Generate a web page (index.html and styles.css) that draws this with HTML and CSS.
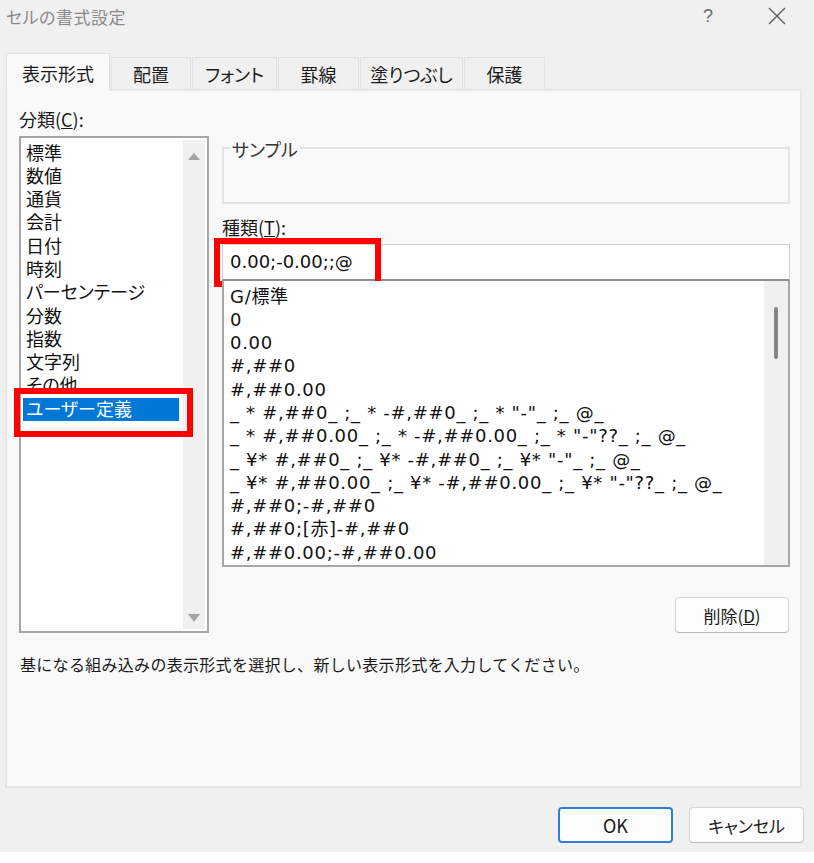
FILE: index.html
```html
<!DOCTYPE html>
<html lang="ja">
<head>
<meta charset="utf-8">
<title>セルの書式設定</title>
<link rel="stylesheet" href="styles.css">
</head>
<body>
<div class="dialog">
  <div class="titlebar">
    <span class="title">セルの書式設定</span>
    <span class="help">?</span>
    <svg class="close" width="18" height="18" viewBox="0 0 18 18"><path d="M1 1 L17 17 M17 1 L1 17" stroke="#5a5a5a" stroke-width="1.3" fill="none"/></svg>
  </div>
  <div class="tabs">
    <div class="tab active">表示形式</div>
    <div class="tab">配置</div>
    <div class="tab">フォント</div>
    <div class="tab">罫線</div>
    <div class="tab">塗りつぶし</div>
    <div class="tab">保護</div>
  </div>
  <div class="panel">
    <div class="top">
      <div class="left">
        <div class="label">分類(<u>C</u>):</div>
        <div class="listbox cat">
          <ul class="items">
            <li>標準</li>
            <li>数値</li>
            <li>通貨</li>
            <li>会計</li>
            <li>日付</li>
            <li>時刻</li>
            <li>パーセンテージ</li>
            <li>分数</li>
            <li>指数</li>
            <li>文字列</li>
            <li>その他</li>
            <li class="selected">ユーザー定義</li>
          </ul>
          <div class="vscroll arrows"><span class="arrow up"></span><span class="arrow down"></span></div>
          <div class="mark mark-cat"></div>
        </div>
      </div>
      <div class="right">
        <div class="sample"><span class="sample-label">サンプル</span></div>
        <div class="label">種類(<u>T</u>):</div>
        <div class="input">0.00;-0.00;;@<div class="mark mark-input"></div></div>
        <div class="listbox types">
          <ul class="items">
            <li>G/標準</li>
            <li>0</li>
            <li>0.00</li>
            <li>#,##0</li>
            <li>#,##0.00</li>
            <li>_ * #,##0_ ;_ * -#,##0_ ;_ * "-"_ ;_ @_</li>
            <li>_ * #,##0.00_ ;_ * -#,##0.00_ ;_ * "-"??_ ;_ @_</li>
            <li>_ ¥* #,##0_ ;_ ¥* -#,##0_ ;_ ¥* "-"_ ;_ @_</li>
            <li>_ ¥* #,##0.00_ ;_ ¥* -#,##0.00_ ;_ ¥* "-"??_ ;_ @_</li>
            <li>#,##0;-#,##0</li>
            <li>#,##0;[赤]-#,##0</li>
            <li>#,##0.00;-#,##0.00</li>
          </ul>
          <div class="vscroll"><span class="thumb"></span></div>
        </div>
        <div class="del-row"><button class="btn">削除(<u>D</u>)</button></div>
      </div>
    </div>
    <p class="desc">基になる組み込みの表示形式を選択し、新しい表示形式を入力してください。</p>
  </div>
  <div class="footer">
    <button class="btn ok">OK</button>
    <button class="btn">キャンセル</button>
  </div>
</div>
</body>
</html>
```
FILE: styles.css
```css
html, body {
  margin: 0;
  padding: 0;
  background: #ffffff;
}
body {
  font-family: "Noto Sans CJK JP", "Noto Sans", sans-serif;
  font-feature-settings: "palt" 1;
}
.dialog {
  width: 814px;
  height: 852px;
  background: #f0f0f0;
  color: #1a1a1a;
  overflow: hidden;
}
.titlebar {
  height: 32px;
  display: flex;
  align-items: center;
  padding-left: 6px;
}
.title {
  flex: 1;
  font-size: 17px;
  color: #8a8a8a;
  letter-spacing: 0.5px;
}
.help {
  font-size: 18px;
  color: #6a6a6a;
  font-family: "Liberation Sans", sans-serif;
  margin-right: 55px;
}
.close {
  margin-right: 28px;
}
.tabs {
  display: flex;
  align-items: flex-end;
  height: 36px;
  margin-top: 21px;
  padding-left: 6px;
}
.tab {
  box-sizing: border-box;
  height: 32px;
  display: flex;
  align-items: center;
  justify-content: center;
  font-size: 18px;
  color: #1a1a1a;
  background: #f0f0f0;
  border: 1px solid #e2e2e2;
  border-bottom: none;
  margin-right: 1px;
}
.tab:nth-child(1) { width: 104px; }
.tab:nth-child(2) { width: 80px; }
.tab:nth-child(3) { width: 85px; }
.tab:nth-child(4) { width: 81px; }
.tab:nth-child(5) { width: 103px; }
.tab:nth-child(6) { width: 81px; }
.tab.active {
  height: 38px;
  margin-bottom: -2px;
  background: #f9f9f9;
  position: relative;
  z-index: 1;
}
.panel {
  box-sizing: border-box;
  width: 797px;
  height: 699px;
  margin-left: 5px;
  background: #f9f9f9;
  border: 2px solid #e6e6e6;
  padding: 16px 0 0 12px;
}
.top {
  display: flex;
  gap: 13px;
}
.left {
  width: 190px;
  display: flex;
  flex-direction: column;
}
.label {
  font-size: 18px;
  line-height: 24px;
  height: 24px;
}
.left .label {
  margin-bottom: 5px;
}
.listbox {
  box-sizing: border-box;
  border: 2px solid #a6a6a6;
  background: #ffffff;
  display: flex;
  position: relative;
}
.items {
  list-style: none;
  margin: 0;
  padding: 3.5px 0 0 0;
  flex: 1;
  font-family: "DejaVu Sans", "Noto Sans CJK JP", sans-serif;
  font-feature-settings: normal;
  font-size: 18px;
  line-height: 23.3px;
  color: #111;
  overflow: hidden;
}
.items li {
  white-space: pre;
  padding-left: 5px;
  height: 23.3px;
}
.cat {
  height: 497px;
}
.cat .items {
  font-feature-settings: "palt" 1;
}
.cat .items li.selected {
  background: #0078d7;
  color: #ffffff;
  margin: 0 4px 0 2px;
  padding-left: 3px;
}
.vscroll {
  width: 22px;
  margin: 2px 2px 2px 0;
  background: #f0f0f0;
  display: flex;
  flex-direction: column;
  align-items: center;
}
.arrows {
  justify-content: space-between;
  padding: 13px 0 7px;
  box-sizing: border-box;
}
.arrow {
  width: 0;
  height: 0;
  border-left: 6px solid transparent;
  border-right: 6px solid transparent;
}
.arrow.up {
  border-bottom: 7px solid #a4a4a4;
}
.arrow.down {
  border-top: 8px solid #a4a4a4;
}
.right {
  width: 568px;
  display: flex;
  flex-direction: column;
}
.sample {
  box-sizing: border-box;
  height: 57px;
  margin-top: 40px;
  border: 2px solid #e3e3e3;
}
.sample-label {
  display: block;
  width: max-content;
  margin: -12px 0 0 6px;
  padding: 0 2px;
  background: #f9f9f9;
  font-size: 18px;
  line-height: 24px;
  color: #333;
}
.right .label {
  margin-top: 11px;
}
.input {
  box-sizing: border-box;
  height: 37px;
  margin-top: 5px;
  background: #ffffff;
  border: 1px solid #cfcfcf;
  border-bottom: 2px solid #8f8f8f;
  padding-left: 7px;
  font-family: "DejaVu Sans", "Noto Sans CJK JP", sans-serif;
  font-size: 18px;
  line-height: 34px;
  color: #111;
  position: relative;
}
.types {
  height: 286px;
  border-top: none;
}
.types .items {
  padding-top: 3.5px;
  letter-spacing: 0.7px;
}
.types .items li {
  padding-left: 6px;
}
.types .vscroll {
  width: 24px;
  margin: 0;
  padding-top: 26px;
  box-sizing: border-box;
}
.thumb {
  width: 4px;
  height: 52px;
  border-radius: 2px;
  background: #858585;
}
.mark {
  position: absolute;
  box-sizing: border-box;
  border: 6px solid #ff0000;
  pointer-events: none;
}
.mark-cat {
  left: -7px;
  top: 250px;
  width: 179px;
  height: 49px;
}
.mark-input {
  left: -9px;
  top: -7px;
  width: 167px;
  height: 49px;
}
.del-row {
  display: flex;
  justify-content: flex-end;
  margin-top: 30px;
  padding-right: 1px;
}
.btn {
  box-sizing: border-box;
  width: 115px;
  height: 36px;
  border-radius: 4px;
  border: 1px solid #d3d3d3;
  border-bottom-color: #b9b9b9;
  background: #fdfdfd;
  font-family: "Noto Sans CJK JP", "Noto Sans", sans-serif;
  font-feature-settings: "palt" 1;
  font-size: 17px;
  color: #1a1a1a;
  padding: 0;
}
.del-row .btn {
  width: 114px;
}
.desc {
  margin: 19px 0 0 1px;
  font-size: 16px;
  font-feature-settings: normal;
  letter-spacing: 0.3px;
  line-height: 24px;
  color: #1a1a1a;
}
.footer {
  display: flex;
  justify-content: flex-end;
  gap: 16px;
  margin-top: 19px;
  padding-right: 10px;
}
.btn.ok {
  border: 2px solid #2f7fd6;
  font-size: 18px;
}
```
